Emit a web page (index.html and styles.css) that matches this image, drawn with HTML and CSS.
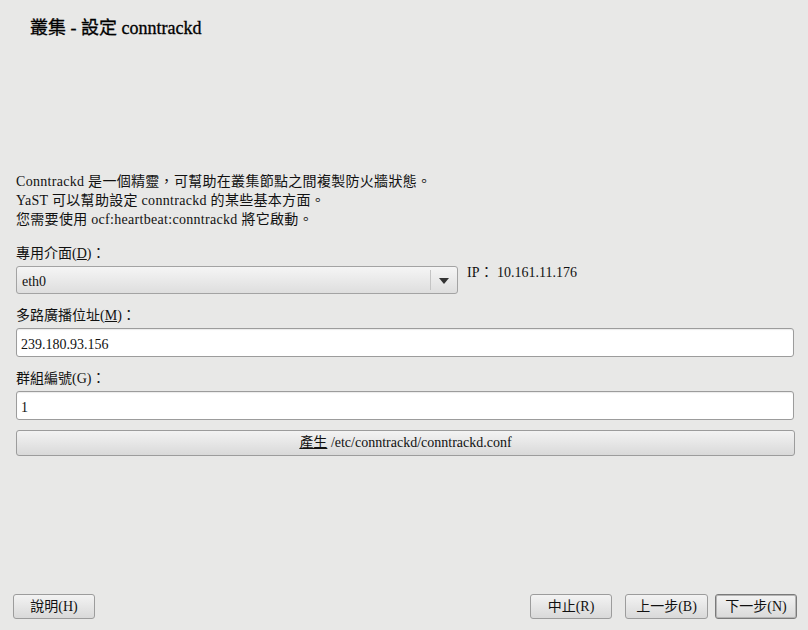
FILE: index.html
```html
<!DOCTYPE html>
<html lang="zh-Hant">
<head>
<meta charset="utf-8">
<title>叢集 - 設定 conntrackd</title>
<link rel="stylesheet" href="styles.css">
</head>
<body>
<div class="page">
  <header class="header">
    <h1 class="title">叢集 - 設定 conntrackd</h1>
  </header>
  <main class="content">
    <p class="desc">Conntrackd 是一個精靈，可幫助在叢集節點之間複製防火牆狀態。<br>YaST 可以幫助設定 conntrackd 的某些基本方面。<br>您需要使用 ocf:heartbeat:conntrackd 將它啟動。</p>

    <div class="label">專用介面(<u>D</u>)：</div>
    <div class="row">
      <div class="combo">
        <span class="combo-text">eth0</span>
        <span class="combo-sep"></span>
        <svg class="combo-arrow" width="10" height="6" viewBox="0 0 10 6"><path d="M0 0H10L5 6Z" fill="#333"/></svg>
      </div>
      <div class="ip">IP：&nbsp;10.161.11.176</div>
    </div>

    <div class="label gap">多路廣播位址(<u>M</u>)：</div>
    <div class="input">239.180.93.156</div>

    <div class="label gap">群組編號(G)：</div>
    <div class="input">1</div>

    <div class="btn wide"><u>產生</u> /etc/conntrackd/conntrackd.conf</div>
  </main>
  <footer class="footer">
    <div class="btn small">說明(H)</div>
    <div class="spacer"></div>
    <div class="btn small">中止(R)</div>
    <div class="btn small b2">上一步(B)</div>
    <div class="btn small b3 focus">下一步(N)</div>
  </footer>
</div>
</body>
</html>
```

FILE: styles.css
```css
html, body {
  margin: 0;
  padding: 0;
  background: #e8e8e7;
}
body {
  font-family: "Liberation Serif", "Noto Sans CJK TC", serif;
  font-size: 14px;
  color: #111;
}
.page {
  width: 808px;
  height: 630px;
  display: flex;
  flex-direction: column;
  box-sizing: border-box;
}
.header {
  padding: 16px 0 0 30px;
}
.title {
  margin: 0;
  font-size: 18px;
  font-weight: normal;
  line-height: 24px;
  color: #000;
  -webkit-text-stroke: 0.3px #000;
}
.content {
  padding: 0 14px 0 16px;
  margin-top: 132px;
}
.desc {
  margin: 0;
  line-height: 19px;
  letter-spacing: 0.3px;
}
.label {
  margin-top: 15px;
  line-height: 19px;
  height: 19px;
}
.label.gap {
  margin-top: 12px;
}
.row {
  display: flex;
  align-items: flex-start;
  margin-top: 3px;
}
.combo {
  width: 442px;
  height: 28px;
  box-sizing: border-box;
  border: 1px solid #a3a3a3;
  border-radius: 3px;
  background: linear-gradient(#f5f5f5, #dedede);
  display: flex;
  align-items: center;
  padding-left: 5px;
}
.combo-text {
  flex: 1;
  padding-top: 3px;
}
.combo-sep {
  width: 1px;
  height: 20px;
  background: #c4c4c4;
  margin-right: 8px;
}
.combo-arrow {
  margin-right: 8px;
  margin-top: 1px;
}
.ip {
  margin-left: 9px;
  line-height: 16px;
  margin-top: -1px;
}
.input {
  margin-top: 3px;
  height: 29px;
  box-sizing: border-box;
  border: 1px solid #9c9c9c;
  border-radius: 3px;
  background: #fff;
  box-shadow: inset 0 1px 1px rgba(0,0,0,0.08);
  padding: 6px 0 0 4px;
  line-height: 19px;
}
.btn {
  box-sizing: border-box;
  border: 1px solid #9c9c9c;
  border-radius: 3px;
  background: linear-gradient(#f3f3f3, #d9d9d9);
  text-align: center;
  color: #111;
}
.btn.wide {
  margin-top: 10px;
  margin-right: -1px;
  height: 26px;
  line-height: 24px;
}
.footer {
  margin-top: auto;
  display: flex;
  padding: 0 11px 11px 13px;
}
.spacer {
  flex: 1;
}
.btn.small {
  width: 82px;
  height: 25px;
  line-height: 23px;
}
.btn.b2 {
  margin-left: 13px;
  width: 83px;
}
.btn.b3 {
  margin-left: 7px;
}
.btn.focus {
  border-color: #7a7a7a;
  box-shadow: inset 0 0 0 1px #b5b5b5;
}
```
